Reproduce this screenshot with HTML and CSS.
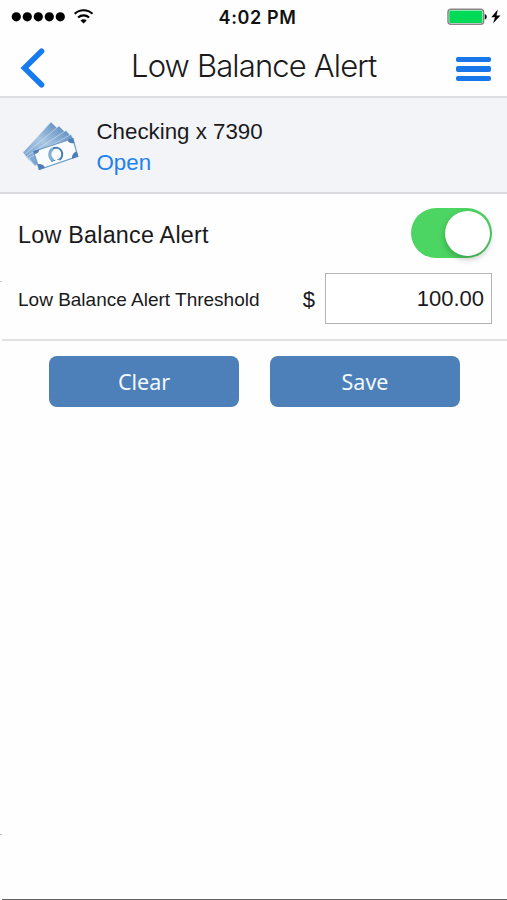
FILE: index.html
```
<!DOCTYPE html>
<html lang="en">

<head>
    <meta charset="UTF-8">
    <meta name="viewport" content="width=device-width, initial-scale=1">
    <title>Low Balance Alert</title>
    <link rel="stylesheet" href="styles.css">
</head>

<body>
    <div class="screen">
        <div class="status-bar">
            <div class="signal">
                <svg width="84" height="18" viewBox="0 0 84 18">
                    <g fill="#000">
                        <circle cx="5.3" cy="8.8" r="4.6" />
                        <circle cx="16.3" cy="8.8" r="4.6" />
                        <circle cx="27.3" cy="8.8" r="4.6" />
                        <circle cx="38.3" cy="8.8" r="4.6" />
                        <circle cx="49.3" cy="8.8" r="4.6" />
                        <path d="M72.6 11.3c1.3 0 2.3.4 3.1 1.1l-3.1 3-3.1-3c.8-.7 1.8-1.1 3.1-1.1z" />
                    </g>
                    <g fill="none" stroke="#000" stroke-width="2.1">
                        <path d="M63.7 5.8a12.8 12.8 0 0 1 17.8 0" />
                        <path d="M67.1 9.6a8 8 0 0 1 11 0" />
                    </g>
                </svg>
            </div>
            <div class="time">4:02 PM</div>
            <div class="battery">
                <svg width="54" height="18" viewBox="0 0 54 18">
                    <rect x="1" y="1.3" width="35.6" height="14.9" rx="3" fill="#fff" stroke="#8a8389" stroke-width="1.5" />
                    <rect x="2.2" y="2.5" width="33.2" height="12.5" rx="1.5" fill="#00db57" />
                    <path d="M37.8 6c2.6.6 2.6 5 0 5.6z" fill="#111" />
                    <path d="M50.8 1.6L44.3 9.3h3.7L46 15.6l7.5-8.2h-4z" fill="#000" />
                </svg>
            </div>
        </div>

        <div class="nav-bar">
            <a class="back" aria-label="Back">
                <svg width="25" height="40" viewBox="0 0 25 40">
                    <path d="M21.5 3.3L4.5 20l17 16.8" fill="none" stroke="#167bee" stroke-width="5.6" stroke-linecap="round" />
                </svg>
            </a>
            <h1>Low Balance Alert</h1>
            <div class="menu">
                <span></span>
                <span></span>
                <span></span>
            </div>
        </div>

        <div class="account">
            <svg class="money" width="60" height="54" viewBox="0 0 60 54">
                <defs>
                    <linearGradient id="bill" x1="1" y1="0" x2="0" y2="1">
                        <stop offset="0" stop-color="#5d8cbd" />
                        <stop offset="0.5" stop-color="#a9c6e3" />
                        <stop offset="1" stop-color="#6f9dc9" />
                    </linearGradient>
                </defs>
                <g fill="url(#bill)" stroke="#d5e4f3" stroke-width="0.6">
                    <path d="M3 34.5L31 4l7 7L9 42z" />
                    <path d="M4.5 36.5L39 8l7 7L11 44z" />
                    <path d="M7 38L46 12.5l6 7L13 46z" />
                    <path d="M9 40L51 16.5l3 6L15 48z" />
                </g>
                <path d="M13.5 33.5L52.8 20.5l5 17.8L19.3 51.5z" fill="#fafdff" stroke="#6f9bc9" stroke-width="1.2" />
                <g fill="#4f7fb3">
                    <path d="M13.2 33.3l6-2c.2 2.6-1.6 4.5-4.6 4.8z" />
                    <path d="M47.5 22l5.6-1.9 1.4 5c-3.6.6-6.1-.2-7-3.1z" />
                    <path d="M17.6 46c3.5-.5 6.4.6 7.3 3.7l-5.9 2.2z" />
                    <path d="M56.8 33.5l1.5 5.1-6.2 2.1c-.5-3.5 1.2-6.2 4.7-7.2z" />
                </g>
                <path d="M33.5 42.6a6 6.6 0 0 1-.6-11.9" fill="none" stroke="#86add4" stroke-width="3.2" />
                <path d="M32.9 30.7a6 6.4 0 0 1 6.5 11.1" fill="none" stroke="#4b7db2" stroke-width="2" />
                <path d="M31 43.2l4.4-.9M37.3 41.6l4-1" stroke="#5d8cbd" stroke-width="1" />
            </svg>
            <div class="account-info">
                <div class="account-name">Checking x 7390</div>
                <a class="account-link">Open</a>
            </div>
        </div>

        <div class="alert-form">
            <div class="toggle-row">
                <div class="toggle-label">Low Balance Alert</div>
                <div class="toggle">
                    <div class="knob"></div>
                </div>
            </div>
            <div class="threshold-row">
                <i class="edge"></i>
                <label for="threshold">Low Balance Alert Threshold</label>
                <span class="currency">$</span>
                <input type="text" id="threshold" value="100.00">
            </div>
        </div>

        <div class="buttons">
            <button type="button">Clear</button>
            <button type="button">Save</button>
        </div>

        <div class="footer">
            <i class="edge"></i>
        </div>
    </div>
</body>

</html>
```
FILE: styles.css
```
* {
    box-sizing: border-box;
}

body {
    margin: 0;
    background-color: #fefefe;
    color: #1a1a1c;
    font-family: "Liberation Sans", Arial, sans-serif;
}

svg {
    display: block;
}

.screen {
    display: flex;
    flex-direction: column;
    width: 507px;
    height: 900px;
    overflow: hidden;
}

.status-bar {
    display: grid;
    grid-template-columns: 1fr auto 1fr;
    align-items: center;
    height: 34px;
    padding: 0 6px 0 14px;
}

.signal {
    margin-left: -3px;
}

.time {
    font-family: Inter, sans-serif;
    font-size: 18px;
    font-weight: 600;
    letter-spacing: 0.6px;
    color: #111;
}

.battery {
    justify-self: end;
}

.nav-bar {
    display: flex;
    align-items: center;
    height: 64px;
    padding: 0 16px 0 20px;
    border-bottom: 2px solid #dcdee1;
}

.back {
    padding-top: 6px;
}

.nav-bar h1 {
    margin: 0 auto 0 86px;
    font-family: Inter, sans-serif;
    font-size: 31px;
    font-weight: 300;
    letter-spacing: -0.85px;
    white-space: nowrap;
}

.menu {
    display: flex;
    flex-direction: column;
    gap: 4px;
    padding-top: 8px;
}

.menu span {
    width: 35px;
    height: 5.3px;
    border-radius: 2px;
    background-color: #1777ea;
}

.account {
    display: flex;
    height: 96px;
    padding: 20px 0 0 20px;
    background-color: #f2f4f8;
    border-bottom: 2px solid #dadce0;
}

.account-info {
    margin-left: 16.5px;
    font-size: 22.3px;
    line-height: 31px;
}

.account-name {
    margin-top: -2px;
}

.account-link {
    color: #1e82ee;
}

.alert-form {
    height: 147px;
    margin-left: 2px;
    padding: 14px 15px 0 16px;
    border-bottom: 2px solid #e1e1e2;
}

.toggle-row {
    display: flex;
    align-items: center;
    justify-content: space-between;
    height: 50px;
}

.toggle-label {
    padding-top: 4px;
    font-size: 23.3px;
    letter-spacing: 0.25px;
}

.toggle {
    width: 81px;
    height: 50px;
    padding: 2.5px;
    border-radius: 25px;
    background-color: #4cd562;
}

.knob {
    width: 45px;
    height: 45px;
    margin-left: auto;
    border-radius: 50%;
    background-color: #fff;
    box-shadow: 0 3px 6px rgba(0, 0, 0, 0.25);
}

.threshold-row {
    position: relative;
    display: flex;
    align-items: center;
    height: 51px;
    margin-top: 15px;
}

.threshold-row label {
    flex: 1;
    padding-top: 2px;
    font-size: 19px;
}

.currency {
    padding-top: 2px;
    margin-right: 10px;
    font-size: 22px;
}

.threshold-row input {
    width: 167px;
    height: 51px;
    padding: 0 7px;
    border: 1.5px solid #b4b4b6;
    border-radius: 0;
    background-color: #fff;
    color: inherit;
    font-family: inherit;
    font-size: 22px;
    text-align: right;
}

/* faint ticks on the left edge */
.edge {
    position: absolute;
    left: 0;
    width: 2px;
    height: 1px;
    background-color: #c4c4c4;
}

.threshold-row .edge {
    top: 8px;
    left: -18px;
}

.buttons {
    display: flex;
    gap: 31px;
    padding: 15px 0 0 49px;
}

.buttons button {
    width: 190px;
    height: 51px;
    padding: 0 0 1px;
    border: none;
    border-radius: 8px;
    background-color: #4d80b9;
    color: #f3f8fd;
    font-family: "Noto Sans", sans-serif;
    font-size: 21.5px;
}

.footer {
    position: relative;
    flex: 1;
    margin-left: 2px;
    border-bottom: 1px solid #626262;
}

.footer .edge {
    bottom: 64px;
    left: -2px;
}
```
